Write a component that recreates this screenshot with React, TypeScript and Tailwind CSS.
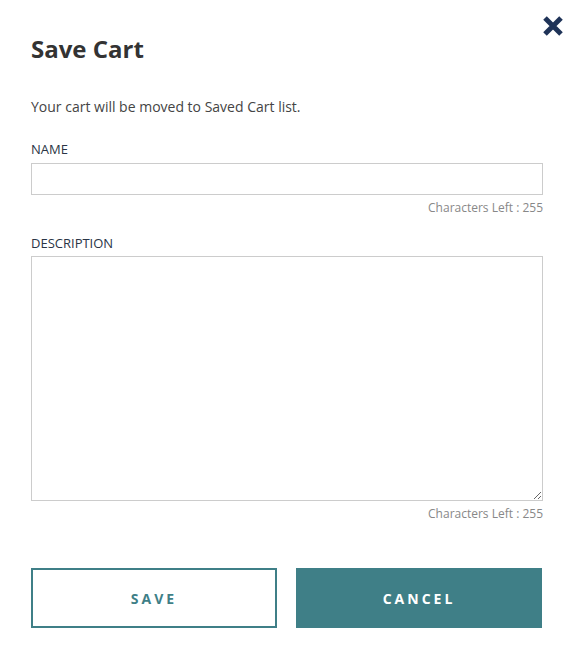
import React from "react";

export default function App() {
    return (
        <div className="w-[574px] h-[654px] bg-white relative" style={{ fontFamily: '"Open Sans", sans-serif' }}>
            {/* Close */}
            <button className="absolute left-[542px] top-[15px] w-[22px] h-[22px] flex items-center justify-center">
                <svg width="22" height="22" viewBox="0 0 22 22">
                    <path d="M3 3 L19 19 M19 3 L3 19" stroke="#1f3358" strokeWidth="5" strokeLinecap="butt" />
                </svg>
            </button>

            <div className="px-[31px] pt-[33px]">
                <h2 className="text-[24px] leading-[32px] font-bold text-[#333333]">Save Cart</h2>

                <p className="mt-[32px] text-[14px] leading-[20px] text-[#444444]">Your cart will be moved to Saved Cart list.</p>

                <label className="block mt-[24px] text-[13px] leading-[16px] font-medium text-[#2a3546]">NAME</label>
                <input type="text" className="block mt-[6px] w-[512px] h-[32px] border border-[#cccccc] outline-none px-2 text-sm" />
                <div className="w-[512px] text-right text-[12px] leading-[16px] text-[#888888] mt-[5px]">Characters Left : 255</div>

                <label className="block mt-[19px] text-[13px] leading-[16px] font-medium text-[#2a3546]">DESCRIPTION</label>
                <textarea className="block mt-[5px] w-[512px] h-[245px] border border-[#cccccc] outline-none p-2 text-sm resize-y" />
                <div className="w-[512px] text-right text-[12px] leading-[16px] text-[#888888] mt-[5px]">Characters Left : 255</div>

                <div className="flex gap-[19px] mt-[46px]">
                    <button className="w-[246px] h-[60px] border-2 border-[#3f7f87] bg-white text-[#3f7f87] text-[14px] font-bold tracking-[3px]">SAVE</button>
                    <button className="w-[246px] h-[60px] bg-[#3f7f87] text-white text-[14px] font-bold tracking-[3px]">CANCEL</button>
                </div>
            </div>
        </div>
    );
}
